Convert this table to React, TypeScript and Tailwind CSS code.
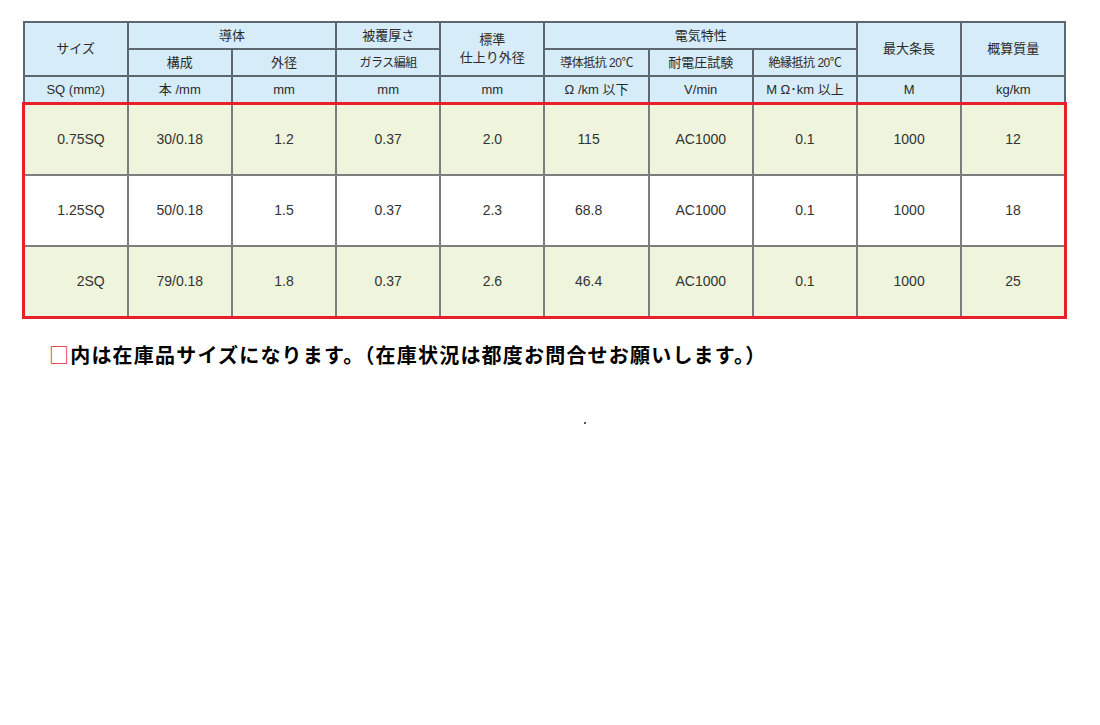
import React from "react";

const hd = "border-2 border-[#5c6770] bg-[#d6ecf9] text-center align-middle text-[13px] text-[#2a2a2a] font-normal p-0";
const hds = "border-2 border-[#5c6770] bg-[#d6ecf9] text-center align-middle text-[12px] text-[#2a2a2a] font-normal p-0 tracking-[-0.5px]";
const dc = "border-2 border-[#7d7d7d] text-center align-middle text-[14px] text-[#333] p-0";

const rows = [
  { bg: "bg-[#eff4dd]", v: ["0.75SQ", "30/0.18", "1.2", "0.37", "2.0", "115", "AC1000", "0.1", "1000", "12"] },
  { bg: "bg-white", v: ["1.25SQ", "50/0.18", "1.5", "0.37", "2.3", "68.8", "AC1000", "0.1", "1000", "18"] },
  { bg: "bg-[#eff4dd]", v: ["2SQ", "79/0.18", "1.8", "0.37", "2.6", "46.4", "AC1000", "0.1", "1000", "25"] },
];

export default function App() {
  return (
    <div
      className="w-[1100px] h-[725px] bg-white overflow-hidden"
      style={{ fontFamily: '"Liberation Sans", Arial, "Noto Sans CJK JP", sans-serif' }}
    >
      <div className="pt-[21px] pl-[22px]">
        <table className="table-fixed border-collapse w-[1042px]">
          <colgroup>
            {Array.from({ length: 10 }).map((_, i) => (
              <col key={i} className="w-[104.2px]" />
            ))}
          </colgroup>
          <thead>
            <tr className="h-[27px]">
              <th rowSpan={2} className={hd}>サイズ</th>
              <th colSpan={2} className={hd}>導体</th>
              <th className={hd}>被覆厚さ</th>
              <th rowSpan={2} className={hd + " leading-[18px]"}>標準<br />仕上り外径</th>
              <th colSpan={3} className={hd}>電気特性</th>
              <th rowSpan={2} className={hd}>最大条長</th>
              <th rowSpan={2} className={hd}>概算質量</th>
            </tr>
            <tr className="h-[27px]">
              <th className={hd}>構成</th>
              <th className={hd}>外径</th>
              <th className={hds}>ガラス編組</th>
              <th className={hds}>導体抵抗 20℃</th>
              <th className={hd}>耐電圧試験</th>
              <th className={hds}>絶縁抵抗 20℃</th>
            </tr>
            <tr className="h-[27px]">
              <th className={hd}>SQ (mm<span className="text-[10px]">2</span>)</th>
              <th className={hd}>本 /mm</th>
              <th className={hd}>mm</th>
              <th className={hd}>mm</th>
              <th className={hd}>mm</th>
              <th className={hd}>Ω /km 以下</th>
              <th className={hd}>V/min</th>
              <th className={hd}>M Ω･km 以上</th>
              <th className={hd}>M</th>
              <th className={hd}>kg/km</th>
            </tr>
          </thead>
          <tbody className="border-[3px] border-[#e8202a]">
            {rows.map((r, i) => (
              <tr key={i} className={"h-[71.5px] " + r.bg}>
                {r.v.map((v, j) => (
                  <td
                    key={j}
                    className={dc + (j === 0 ? " !text-right pr-[22px]" : "") + (j === 5 ? " pr-[16px]" : "")}
                  >
                    {v}
                  </td>
                ))}
              </tr>
            ))}
          </tbody>
        </table>
      </div>
      <div
        className="mt-[22px] pl-[49px] text-[20px] font-bold leading-[28px] text-black tracking-[1.2px]"
        style={{ fontFamily: '"Noto Sans CJK JP", sans-serif' }}
      >
        <span className="text-[#e8202a] font-normal">□</span>内は在庫品サイズになります。（在庫状況は都度お問合せお願いします。）
      </div>
      <div className="mt-[53px] pl-[584px]">
        <div className="w-[2px] h-[2px] bg-[#555]" />
      </div>
    </div>
  );
}
